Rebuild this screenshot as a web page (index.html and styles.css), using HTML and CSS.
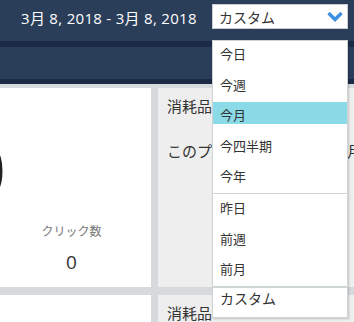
FILE: index.html
```html
<!DOCTYPE html>
<html lang="ja">
<head>
<meta charset="utf-8">
<link rel="stylesheet" href="styles.css">
</head>
<body>
<header class="topbar">
  <div class="date-range">3月 8, 2018 - 3月 8, 2018</div>
  <div class="select">
    <span class="select-label">カスタム</span>
    <svg class="chevron" width="16" height="11" viewBox="0 0 16 11"><path d="M1.5 2 L8 8.5 L14.5 2" fill="none" stroke="#3b8fe0" stroke-width="3.4" stroke-linejoin="miter"/></svg>
  </div>
</header>
<div class="strip"></div>
<div class="subbar"></div>
<div class="strip strip-bottom"></div>
<main class="grid">
  <section class="card card-white">
    <div class="big-number">0</div>
    <div class="metric-label">クリック数</div>
    <div class="metric-value">0</div>
  </section>
  <section class="card card-gray">
    <div class="card-title">消耗品</div>
    <div class="card-text">このプロジェクト全期間の月間消耗品費</div>
  </section>
  <section class="card card-white"></section>
  <section class="card card-gray">
    <div class="card-title">消耗品</div>
  </section>
</main>
<div class="dropdown">
  <div class="group">
    <div class="item">今日</div>
    <div class="item">今週</div>
    <div class="item active">今月</div>
    <div class="item">今四半期</div>
    <div class="item">今年</div>
  </div>
  <div class="group">
    <div class="item">昨日</div>
    <div class="item">前週</div>
    <div class="item">前月</div>
  </div>
  <div class="group group-last">
    <div class="item item-custom">カスタム</div>
  </div>
</div>
</body>
</html>
```
FILE: styles.css
```css
html, body {
  margin: 0;
  padding: 0;
}
body {
  width: 354px;
  height: 322px;
  overflow: hidden;
  position: relative;
  background: #d6dadc;
  font-family: "Open Sans", "Noto Sans CJK JP", sans-serif;
  color: #333;
}
.topbar {
  height: 41px;
  background: #2a3e5a;
  display: flex;
  align-items: flex-start;
  box-sizing: border-box;
}
.date-range {
  color: #fff;
  font-size: 15px;
  letter-spacing: 0.3px;
  line-height: 20px;
  margin-top: 8px;
  margin-left: 21px;
  width: 191px;
  white-space: nowrap;
  font-family: "Open Sans", "Noto Sans CJK JP", sans-serif;
}
.select {
  margin-top: 4px;
  width: 136px;
  height: 25px;
  box-sizing: border-box;
  background: #fff;
  border: 1px solid #c9ced3;
  display: flex;
  align-items: center;
  justify-content: space-between;
  padding: 0 4px 0 6px;
}
.select-label {
  font-family: "Noto Sans CJK JP", sans-serif;
  font-size: 14px;
  color: #333;
  line-height: 20px;
}
.chevron {
  display: block;
}
.strip {
  height: 6px;
  background: #1c2b45;
}
.strip-bottom {
  height: 5px;
}
.subbar {
  height: 32px;
  background: #2a3e5a;
}
.grid {
  display: grid;
  grid-template-columns: 159px 220px;
  grid-template-rows: 199px 40px;
  column-gap: 7px;
  row-gap: 8px;
  margin-left: -8px;
  padding-top: 4px;
  background: #d6dadc;
}
.card {
  box-sizing: border-box;
  overflow: hidden;
}
.card-white {
  background: #fff;
  display: flex;
  flex-direction: column;
  align-items: center;
}
.card-gray {
  background: #eeeeee;
  padding: 7px 0 0 9px;
  white-space: nowrap;
}
.big-number {
  align-self: flex-start;
  font-family: "Open Sans", sans-serif;
  font-size: 70px;
  line-height: 70px;
  color: #222;
  margin-top: 46px;
  margin-left: -26px;
  height: 70px;
}
.metric-label {
  margin-top: 18px;
  font-family: "Noto Sans CJK JP", sans-serif;
  font-size: 12px;
  line-height: 18px;
  color: #777;
}
.metric-value {
  margin-top: 10px;
  font-size: 19px;
  line-height: 24px;
  color: #333;
}
.card-title {
  font-family: "Noto Sans CJK JP", sans-serif;
  font-size: 15px;
  line-height: 22px;
  color: #333;
}
.card-text {
  margin-top: 23px;
  font-family: "Noto Sans CJK JP", sans-serif;
  font-size: 15px;
  line-height: 22px;
  color: #333;
}
.dropdown {
  position: absolute;
  left: 212px;
  top: 40px;
  width: 136px;
  box-sizing: border-box;
  background: #fff;
  border: 1px solid #cfd4d7;
  box-shadow: 1px 1px 2px rgba(0, 0, 0, 0.18);
}
.group {
  border-bottom: 1px solid #cfd4d7;
  padding-bottom: 8px;
}
.group + .group {
  padding-top: 1px;
}
.group-last {
  border-bottom: none;
  border-top: 1px solid #cfd4d7;
  padding-bottom: 6px;
}
.item {
  height: 22px;
  box-sizing: border-box;
  padding: 4px 0 0 7px;
  margin-bottom: 8.5px;
  font-family: "Noto Sans CJK JP", sans-serif;
  font-size: 13px;
  line-height: 18px;
  color: #333;
}
.group .item:last-child {
  margin-bottom: 0;
}
.item.active {
  background: #8adae8;
}
.item-custom {
  font-size: 14px;
  padding-top: 0;
}
```
